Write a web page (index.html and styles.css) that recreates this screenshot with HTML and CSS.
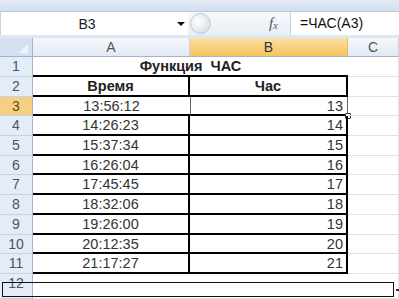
FILE: index.html
```html
<!DOCTYPE html>
<html>
<head>
<meta charset="utf-8">
<link rel="stylesheet" href="styles.css">
</head>
<body>
<div class="app">
  <div class="topstrip"></div>
  <div class="fbar">
    <div class="namebox"><span class="nametext">B3</span><span class="arrow"></span></div>
    <div class="btnzone">
      <span class="knob"></span>
      <span class="fx"><i>f</i><sub>x</sub></span>
    </div>
    <div class="formula">=ЧАС(A3)</div>
  </div>
  <div class="sheet">
    <div class="corner"><span class="tri"></span></div>
    <div class="colh">A</div>
    <div class="colh sel">B</div>
    <div class="colh">C</div>

    <div class="rowh">1</div>
    <div class="cell title">Функция&nbsp; ЧАС</div>
    <div class="cell grid"></div>

    <div class="rowh">2</div>
    <div class="cell a b2 bold">Время</div>
    <div class="cell bb b2 bold">Час</div>
    <div class="cell grid"></div>

    <div class="rowh sel">3</div>
    <div class="cell a asel">13:56:12</div>
    <div class="cell bsel num">13<span class="handle"></span></div>
    <div class="cell grid"></div>

    <div class="rowh">4</div>
    <div class="cell a">14:26:23</div>
    <div class="cell bb num">14</div>
    <div class="cell grid"></div>

    <div class="rowh">5</div>
    <div class="cell a">15:37:34</div>
    <div class="cell bb num">15</div>
    <div class="cell grid"></div>

    <div class="rowh">6</div>
    <div class="cell a">16:26:04</div>
    <div class="cell bb num">16</div>
    <div class="cell grid"></div>

    <div class="rowh">7</div>
    <div class="cell a">17:45:45</div>
    <div class="cell bb num">17</div>
    <div class="cell grid"></div>

    <div class="rowh">8</div>
    <div class="cell a">18:32:06</div>
    <div class="cell bb num">18</div>
    <div class="cell grid"></div>

    <div class="rowh">9</div>
    <div class="cell a">19:26:00</div>
    <div class="cell bb num">19</div>
    <div class="cell grid"></div>

    <div class="rowh">10</div>
    <div class="cell a">20:12:35</div>
    <div class="cell bb num">20</div>
    <div class="cell grid"></div>

    <div class="rowh">11</div>
    <div class="cell a">21:17:27</div>
    <div class="cell bb num">21</div>
    <div class="cell grid"></div>

    <div class="rowh">12</div>
    <div class="cell grid plain"></div>
    <div class="cell grid plain"></div>
    <div class="cell grid"></div>
  </div>
  <div class="outline"></div>
  <div class="dot"></div>
</div>
</body>
</html>
```

FILE: styles.css
```css
* { box-sizing: border-box; }
html, body { margin: 0; padding: 0; }
body {
  width: 399px;
  height: 299px;
  overflow: hidden;
  background: #ffffff;
  font-family: "Liberation Sans", Arial, sans-serif;
}
.app {
  position: relative;
  width: 399px;
  height: 299px;
  display: flex;
  flex-direction: column;
  background: #dde7f3;
}
.topstrip {
  height: 12px;
  background: linear-gradient(#e3ebf6, #d3dfee);
  border-bottom: 1px solid #b7c8de;
}
.fbar {
  height: 23px;
  display: flex;
  background: #eef2f8;
}
.namebox {
  width: 188px;
  background: #ffffff;
  position: relative;
  display: flex;
  align-items: center;
  border-left: 1px solid #c9d4e2;
}
.nametext {
  width: 172px;
  text-align: center;
  font-size: 14px;
  color: #222;
}
.arrow {
  width: 0;
  height: 0;
  border-left: 4px solid transparent;
  border-right: 4px solid transparent;
  border-top: 4px solid #111;
  margin-left: 4px;
}
.btnzone {
  width: 102px;
  display: flex;
  align-items: center;
  background: linear-gradient(#f6f8fb, #e9eef5);
}
.knob {
  width: 21px;
  height: 21px;
  border-radius: 50%;
  margin-left: 2px;
  border: 1px solid #c0c8d2;
  background: radial-gradient(circle at 35% 40%, #ffffff 0, #f2f4f7 30%, #dbe0e7 75%, #cbd2db 100%);
}
.fx {
  margin-left: 58px;
  font-family: "Liberation Serif", "Times New Roman", serif;
  font-size: 15px;
  color: #555;
  line-height: 1;
}
.fx i { font-style: italic; }
.fx sub { font-size: 10px; font-style: italic; vertical-align: -1px; }
.formula {
  flex: 1;
  background: #ffffff;
  border-left: 1px solid #c9d4e2;
  padding-left: 9px;
  font-size: 14px;
  line-height: 23px;
  color: #111;
}
.sheet {
  margin-top: 3px;
  flex: 1;
  display: grid;
  grid-template-columns: 33px 157px 158px 51px;
  grid-template-rows: 19px 20px 20px 19px 20px 20px 19px 20px 20px 20px 19px 20px 1fr;
  background: #ffffff;
}
.corner {
  background: #d5e1f0;
  border-right: 1px solid #9eb6ce;
  border-bottom: 1px solid #9eb6ce;
  position: relative;
}
.tri {
  position: absolute;
  right: 4px;
  bottom: 3px;
  width: 0;
  height: 0;
  border-left: 9px solid transparent;
  border-bottom: 9px solid #eef3fa;
}
.colh {
  background: linear-gradient(#f5f8fc, #e2e9f3);
  border-right: 1px solid #c5d3e3;
  border-bottom: 1px solid #9eb6ce;
  text-align: center;
  font-size: 14px;
  line-height: 19px;
  color: #555;
}
.colh.sel {
  background: linear-gradient(#fbe0a4, #f5c45d);
  border-right-color: #f0b957;
  color: #333;
}
.rowh {
  background: #e4ecf7;
  border-right: 1px solid #9eb6ce;
  border-bottom: 1px solid #c5d3e3;
  text-align: center;
  font-size: 14px;
  line-height: 19px;
  color: #44556c;
}
.rowh.sel {
  background: #f7cf82;
  color: #5b4a2a;
}
.cell {
  font-size: 14.5px;
  color: #333;
  line-height: 18px;
  white-space: nowrap;
  position: relative;
}
.grid {
  border-right: 1px solid #dfe3e8;
  border-bottom: 1px solid #dfe3e8;
}
.plain { border-right: none; }
.title {
  grid-column: 2 / span 2;
  text-align: center;
  font-weight: bold;
  border-bottom: 2px solid #000;
  color: #222;
}
.a {
  text-align: center;
  border-bottom: 2px solid #000;
  border-right: 2px solid #000;
}
.a.asel {
  border-right: none;
}
.bb {
  border-bottom: 2px solid #000;
  border-right: 2px solid #000;
}
.b2 { text-align: center; }
.bold { font-weight: bold; color: #222; }
.num {
  text-align: right;
  padding-right: 3px;
}
.bsel {
  border-left: 1px solid #666;
  border-right: 1px solid #666;
  border-bottom: 2px solid #000;
  padding-right: 4px;
}
.handle {
  position: absolute;
  right: -4px;
  bottom: -5px;
  width: 6px;
  height: 6px;
  background: #fff;
  border: 1px solid #333;
  border-radius: 1px;
}
.outline {
  position: absolute;
  left: 2px;
  top: 282px;
  width: 392px;
  height: 15px;
  border: 1px solid #111;
}
.dot {
  position: absolute;
  left: 396px;
  top: 289px;
  width: 3px;
  height: 2px;
  background: #333;
}
```
